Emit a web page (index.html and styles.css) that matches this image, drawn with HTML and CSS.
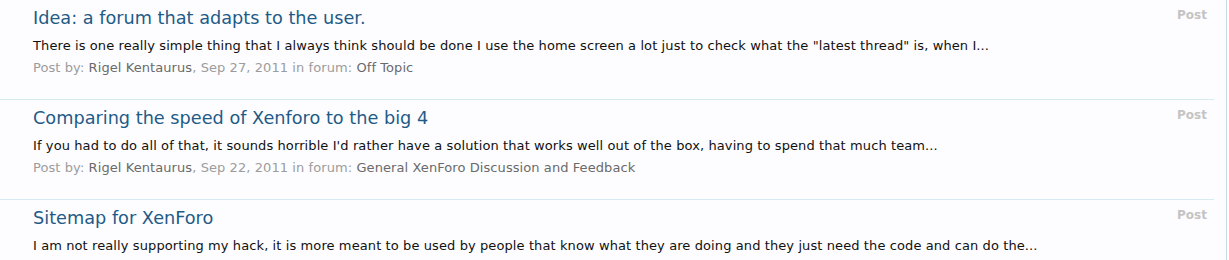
FILE: index.html
```html
<!DOCTYPE html>
<html>
<head>
<meta charset="utf-8">
<link rel="stylesheet" href="styles.css">
</head>
<body>
<div class="page">
  <ol class="results">
    <li class="result">
      <div class="main">
        <h3 class="title"><a href="#">Idea: a forum that adapts to the user.</a></h3>
        <p class="snippet">There is one really simple thing that I always think should be done I use the home screen a lot just to check what the "latest thread" is, when I...</p>
        <p class="meta">Post by: <a href="#">Rigel Kentaurus</a>, Sep 27, 2011 in forum: <a href="#">Off Topic</a></p>
      </div>
      <span class="type">Post</span>
    </li>
    <li class="result">
      <div class="main">
        <h3 class="title"><a href="#">Comparing the speed of Xenforo to the big 4</a></h3>
        <p class="snippet">If you had to do all of that, it sounds horrible I'd rather have a solution that works well out of the box, having to spend that much team...</p>
        <p class="meta">Post by: <a href="#">Rigel Kentaurus</a>, Sep 22, 2011 in forum: <a href="#">General XenForo Discussion and Feedback</a></p>
      </div>
      <span class="type">Post</span>
    </li>
    <li class="result">
      <div class="main">
        <h3 class="title"><a href="#">Sitemap for XenForo</a></h3>
        <p class="snippet">I am not really supporting my hack, it is more meant to be used by people that know what they are doing and they just need the code and can do the...</p>
      </div>
      <span class="type">Post</span>
    </li>
  </ol>
</div>
</body>
</html>
```

FILE: styles.css
```css
html, body {
  margin: 0;
  padding: 0;
  background: #ffffff;
}
.page {
  width: 1226px;
  height: 260px;
  overflow: hidden;
  border-right: 1px solid #c8dde8;
  background: #fdfdff;
  font-family: "DejaVu Sans", Verdana, sans-serif;
}
.results {
  list-style: none;
  margin: 0;
  padding: 0;
}
.result {
  display: flex;
  justify-content: space-between;
  height: 99px;
  padding: 0 7px 0 33px;
  margin-right: 12px;
  border-bottom: 1px solid #d7ebf3;
}
.main {
  padding-top: 6px;
}
.title {
  margin: 0;
  font-size: 17.7px;
  font-weight: normal;
  line-height: 25px;
}
.title a {
  color: #1f5b87;
  text-decoration: none;
}
.snippet {
  margin: 6px 0 0;
  font-size: 13px;
  letter-spacing: 0.1px;
  line-height: 17px;
  color: #111111;
}
.meta {
  margin: 4px 0 0;
  font-size: 13px;
  letter-spacing: 0.08px;
  line-height: 20px;
  color: #9c9c9c;
}
.meta a {
  color: #6a6a6a;
  text-decoration: none;
}
.type {
  padding-top: 8px;
  font-size: 12px;
  font-weight: bold;
  color: #c4c4c4;
}
```
